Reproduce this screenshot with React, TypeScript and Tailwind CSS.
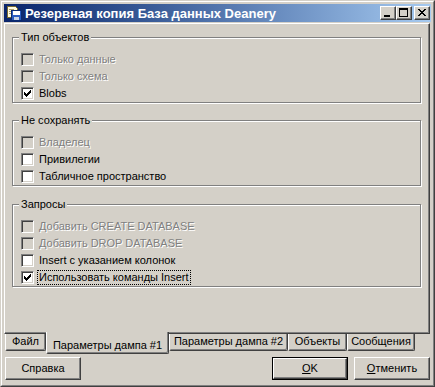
import React from "react";

const font = "font-['Liberation_Sans',Arial,sans-serif]";

function CheckBox({ checked, disabled }: { checked?: boolean; disabled?: boolean }) {
  return (
    <span
      className={`relative block w-[13px] h-[13px] shrink-0 border border-t-[#808080] border-l-[#808080] border-b-white border-r-white shadow-[inset_1px_1px_0_#404040,inset_-1px_-1px_0_#d4d0c8] ${
        disabled ? "bg-[#d4d0c8]" : "bg-white"
      }`}
    >
      {checked && (
        <svg className="absolute left-[2px] top-[2px]" width="7" height="7" viewBox="0 0 7 7" shapeRendering="crispEdges">
          <path
            fill={disabled ? "#808080" : "#000"}
            d="M0 2h1v3H0z M1 3h1v3H1z M2 4h1v3H2z M3 3h1v3H3z M4 2h1v3H4z M5 1h1v3H5z M6 0h1v3H6z"
          />
        </svg>
      )}
    </span>
  );
}

type Item = { label: string; checked?: boolean; disabled?: boolean; focused?: boolean };

function Row({ label, checked, disabled, focused }: Item) {
  return (
    <div className="flex h-[17px] items-center">
      <CheckBox checked={checked} disabled={disabled} />
      {focused ? (
        <span className="ml-[3px] border border-dotted border-black px-[1px] leading-[13px]">{label}</span>
      ) : (
        <span
          className={`ml-[5px] leading-[13px] ${
            disabled ? "text-[#808080] [text-shadow:1px_1px_0_#ffffff]" : ""
          }`}
        >
          {label}
        </span>
      )}
    </div>
  );
}

function GroupBox({ title, items, className }: { title: string; items: Item[]; className?: string }) {
  return (
    <div
      className={`relative w-[409px] border border-[#808080] pl-[8px] pt-[13px] shadow-[inset_1px_1px_0_#ffffff,1px_1px_0_#ffffff] ${className ?? ""}`}
    >
      <span className="absolute left-[6px] -top-[7px] bg-[#d4d0c8] px-[2px] leading-[13px]">{title}</span>
      {items.map((it) => (
        <Row key={it.label} {...it} />
      ))}
    </div>
  );
}

function CaptionButton({ children }: { children: React.ReactNode }) {
  return (
    <div className="flex h-[14px] w-[16px] items-start justify-start border border-t-white border-l-white border-b-[#404040] border-r-[#404040] bg-[#d4d0c8] shadow-[inset_-1px_-1px_0_#808080]">
      {children}
    </div>
  );
}

function Tab({ label, active, w }: { label: string; active?: boolean; w: string }) {
  if (active) {
    return (
      <div
        className={`relative z-10 -mt-[2px] h-[22px] ${w} rounded-b-[2px] border-l border-l-white border-r border-r-[#404040] border-b border-b-[#404040] bg-[#d4d0c8] pt-[7px] text-center leading-[13px] shadow-[inset_-1px_-1px_0_#808080]`}
      >
        {label}
      </div>
    );
  }
  return (
    <div
      className={`h-[17px] ${w} rounded-b-[2px] border-l border-l-white border-r border-r-[#404040] border-b border-b-[#404040] pt-[1px] text-center leading-[13px] shadow-[inset_-1px_-1px_0_#808080]`}
    >
      {label}
    </div>
  );
}

function Button({ children, isDefault }: { children: React.ReactNode; isDefault?: boolean }) {
  const inner = (
    <div className="flex h-full w-full items-center justify-center border border-t-white border-l-white border-b-[#404040] border-r-[#404040] shadow-[inset_-1px_-1px_0_#808080] leading-[13px]">
      {children}
    </div>
  );
  return isDefault ? (
    <div className="h-[23px] w-[76px] border border-black">{inner}</div>
  ) : (
    <div className="h-[23px] w-[76px]">{inner}</div>
  );
}

export default function App() {
  return (
    <div className={`${font} text-[11px] text-black`}>
      <div className="h-[387px] w-[435px] border border-t-[#d4d0c8] border-l-[#d4d0c8] border-b-[#404040] border-r-[#404040] bg-[#d4d0c8]">
        <div className="flex h-full w-full flex-col border border-t-white border-l-white border-b-[#808080] border-r-[#808080] p-[2px]">
          {/* caption */}
          <div className="flex h-[18px] items-center bg-linear-to-r from-[#0a246a] to-[#a6caf0] pl-[2px] pr-[1px]">
            <svg width="16" height="16" viewBox="0 0 16 16" shapeRendering="crispEdges">
              <path d="M1 1h8l2 2v9H1z" fill="#fffbe0" stroke="#7a6a30" strokeWidth="1" />
              <path d="M3 4h5M3 6h5M3 8h3" stroke="#b0a070" />
              <rect x="5.5" y="5.5" width="10" height="10" fill="#2a5cc0" stroke="#0a2a70" />
              <rect x="7" y="6" width="7" height="4" fill="#ffffff" />
              <rect x="8" y="12" width="5" height="3" fill="#c8d4e8" />
            </svg>
            <span className="ml-[3px] text-[13px] font-bold leading-[15px] text-white">Резервная копия База данных Deanery</span>
            <div className="ml-auto flex items-center">
              <CaptionButton>
                <svg width="14" height="12" viewBox="0 0 14 12" shapeRendering="crispEdges">
                  <rect x="3" y="8" width="6" height="2" fill="#000" />
                </svg>
              </CaptionButton>
              <CaptionButton>
                <svg width="14" height="12" viewBox="0 0 14 12" shapeRendering="crispEdges">
                  <path d="M2 1h9v9H2z M3 3v6h7V3z" fill="#000" fillRule="evenodd" />
                </svg>
              </CaptionButton>
              <div className="ml-[2px]">
                <CaptionButton>
                  <svg width="14" height="12" viewBox="0 0 14 12" shapeRendering="crispEdges">
                    <path
                      fill="#000"
                      d="M3 2h2v1H3z M9 2h2v1H9z M4 3h2v1H4z M8 3h2v1H8z M5 4h4v1H5z M6 5h2v1H6z M5 6h4v1H5z M4 7h2v1H4z M8 7h2v1H8z M3 8h2v1H3z M9 8h2v1H9z"
                    />
                  </svg>
                </CaptionButton>
              </div>
            </div>
          </div>

          {/* tab page */}
          <div className="mt-[1px] h-[311px] w-[426px] border border-t-white border-l-white border-b-[#404040] border-r-[#404040] pl-[7px] pt-[13px] shadow-[inset_-1px_-1px_0_#808080]">
            <GroupBox
              title="Тип объектов"
              items={[
                { label: "Только данные", disabled: true },
                { label: "Только схема", disabled: true },
                { label: "Blobs", checked: true },
              ]}
            />
            <GroupBox
              className="mt-[17px]"
              title="Не сохранять"
              items={[
                { label: "Владелец", disabled: true },
                { label: "Привилегии" },
                { label: "Табличное пространство" },
              ]}
            />
            <GroupBox
              className="mt-[18px]"
              title="Запросы"
              items={[
                { label: "Добавить CREATE DATABASE", disabled: true },
                { label: "Добавить DROP DATABASE", disabled: true },
                { label: "Insert с указанием колонок" },
                { label: "Использовать команды Insert", checked: true, focused: true },
              ]}
            />
          </div>

          {/* tabs */}
          <div className="flex items-start pl-[1px]">
            <Tab label="Файл" w="w-[41px]" />
            <Tab label="Параметры дампа #1" w="w-[123px]" active />
            <Tab label="Параметры дампа #2" w="w-[119px]" />
            <Tab label="Объекты" w="w-[59px]" />
            <Tab label="Сообщения" w="w-[68px]" />
          </div>

          {/* buttons */}
          <div className="mt-[3px] flex pl-[1px] pr-[1px]">
            <Button>Справка</Button>
            <div className="ml-auto flex gap-[6px]">
              <Button isDefault>
                <span>
                  <span className="underline">O</span>K
                </span>
              </Button>
              <Button>
                <span>
                  <span className="underline">О</span>тменить
                </span>
              </Button>
            </div>
          </div>
        </div>
      </div>
    </div>
  );
}
